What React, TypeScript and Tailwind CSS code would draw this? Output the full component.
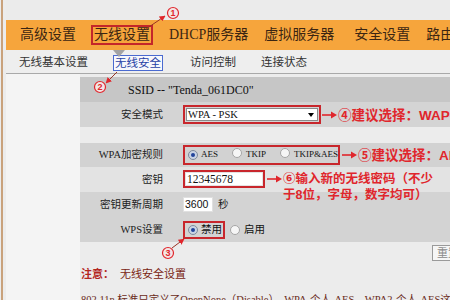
import React from 'react'

const RED = '#e0262c'

function Radio({ on = false }: { on?: boolean }) {
  return (
    <span
      className={
        on
          ? 'inline-flex h-[10px] w-[10px] shrink-0 items-center justify-center rounded-full border border-[#7f8a9c] bg-[#c9d3e4]'
          : 'inline-flex h-[10px] w-[10px] shrink-0 items-center justify-center rounded-full border border-[#a6a6a6] bg-[#f6f6f6]'
      }
    >
      {on && <span className="h-[4px] w-[4px] rounded-full bg-[#22449a]" />}
    </span>
  )
}

function Arrow() {
  return (
    <svg width="15" height="8" viewBox="0 0 15 8" className="shrink-0">
      <line x1="0" y1="4" x2="10" y2="4" stroke={RED} strokeWidth="1.6" />
      <path d="M9 0.5 L15 4 L9 7.5Z" fill={RED} />
    </svg>
  )
}

function Note({ children }: { children: React.ReactNode }) {
  return (
    <span className="whitespace-nowrap font-['Liberation_Sans','Noto_Sans_CJK_SC',sans-serif] text-[13.5px] font-bold leading-[16px] text-[#e0262c]">
      {children}
    </span>
  )
}

function Label({ children }: { children: React.ReactNode }) {
  return (
    <div className="w-[83px] shrink-0 whitespace-nowrap text-right text-[10.5px] leading-[14px] text-[#222]">
      {children}
    </div>
  )
}

// circled step markers ①②③ with their pointer lines
function Marks() {
  const circle = (cx: number, cy: number, n: string) => (
    <g>
      <circle cx={cx} cy={cy} r="5.5" fill="#f3e6e6" stroke={RED} strokeWidth="1.2" />
      <text
        x={cx}
        y={cy + 3.3}
        textAnchor="middle"
        fontSize="9"
        fontWeight="bold"
        fill={RED}
        fontFamily="Liberation Sans, sans-serif"
      >
        {n}
      </text>
    </g>
  )
  return (
    <svg className="pointer-events-none absolute inset-0" width="450" height="300">
      <defs>
        <marker id="ah" viewBox="0 0 10 10" refX="9" refY="5" markerWidth="6" markerHeight="6" orient="auto">
          <path d="M0 0 L10 5 L0 10Z" fill={RED} />
        </marker>
      </defs>
      <line x1="146" y1="29" x2="165" y2="16" stroke="#9a3324" strokeWidth="1" markerEnd="url(#ah)" />
      {circle(173, 13, '1')}
      <line x1="117" y1="72" x2="106" y2="83" stroke="#9a3324" strokeWidth="1" markerEnd="url(#ah)" />
      {circle(100, 87, '2')}
      <line x1="172" y1="248" x2="184" y2="239" stroke="#9a3324" strokeWidth="1" markerEnd="url(#ah)" />
      {circle(168, 253, '3')}
    </svg>
  )
}

export default function App() {
  return (
    <div className="relative h-[300px] w-[450px] overflow-hidden bg-[#ececec] font-['Liberation_Serif','Noto_Sans_CJK_SC',serif]">
      <div className="ml-[1px] flex h-full flex-col border-l-[2px] border-[#c9a27c] pl-[3px]">
        {/* logo strip, mostly cut off */}
        <div className="h-[20px] shrink-0 overflow-hidden bg-[#ebebeb]">
          <div className="mt-[-42px] pl-[10px] font-['Liberation_Sans',sans-serif] text-[48px] font-bold leading-[48px] tracking-[9px] text-[#595959]">
            TENDA
          </div>
        </div>

        {/* main nav */}
        <div className="flex h-[30px] shrink-0 items-center whitespace-nowrap bg-[#f6a53c] text-[14px] leading-[14px] text-[#3b2512]">
          <span className="ml-[14px]">高级设置</span>
          <span className="ml-[15px] border-2 border-[#c4262a] px-[1px] py-[1px]">无线设置</span>
          <span className="ml-[16px]">DHCP服务器</span>
          <span className="ml-[16px]">虚拟服务器</span>
          <span className="ml-[20px]">安全设置</span>
          <span className="ml-[16px]">路由设置</span>
        </div>

        {/* sub nav */}
        <div className="relative flex h-[24px] shrink-0 items-center whitespace-nowrap border-b border-[#a9a9a9] bg-[#eeeeee] text-[11.5px] leading-[12px] text-[#333]">
          <span className="absolute left-[107px] top-0 h-0 w-0 border-x-[6px] border-t-[7px] border-x-transparent border-t-[#a3a3a3]" />
          <span className="ml-[13px]">无线基本设置</span>
          <span className="ml-[25px] mt-[3px] border border-[#4a6ad0] bg-[#f7f8fc] px-[1px] py-[1px] text-[#2641a6]">无线安全</span>
          <span className="ml-[27px]">访问控制</span>
          <span className="ml-[25px]">连接状态</span>
        </div>

        {/* body */}
        <div className="flex flex-1">
          <div className="w-[74px] shrink-0 bg-[#f4f4f4]" />
          <div className="flex-1 pt-[3px]">
            <div className="flex h-[25px] items-center bg-[#c6c6c6] pl-[48px] text-[12px] text-[#111]">
              SSID -- "Tenda_061DC0"
            </div>

            <div className="flex h-[25px] items-center bg-[#d4d4d4]">
              <Label>安全模式</Label>
              <div className="ml-[20px] h-[19px] w-[138px] shrink-0 border-2 border-[#c8262c] p-[1px]">
                <div className="flex h-full items-center border border-[#8a8a8a] bg-white pl-[1px] text-[10.5px] leading-[12px] text-[#111]">
                  WPA - PSK
                  <span className="ml-auto mr-[3px] h-0 w-0 border-x-[3px] border-t-[4px] border-x-transparent border-t-black" />
                </div>
              </div>
              <span className="ml-[1px]">
                <Arrow />
              </span>
              <span className="ml-[1px]">
                <Note>④建议选择：WAP-PSK</Note>
              </span>
            </div>

            <div className="h-[16px]" />

            <div className="flex h-[24px] items-center bg-[#d2d2d2]">
              <Label>WPA加密规则</Label>
              <div className="ml-[20px] flex h-[20px] w-[157px] shrink-0 items-center whitespace-nowrap border-2 border-[#c8262c] pl-[3px] text-[9px] text-[#111]">
                <Radio on />
                <span className="ml-[3px]">AES</span>
                <span className="ml-[14px]">
                  <Radio />
                </span>
                <span className="ml-[4px]">TKIP</span>
                <span className="ml-[14px]">
                  <Radio />
                </span>
                <span className="ml-[4px]">TKIP&amp;AES</span>
              </div>
              <span className="ml-[2px]">
                <Arrow />
              </span>
              <span className="ml-[1px]">
                <Note>⑤建议选择：AES</Note>
              </span>
            </div>

            <div className="flex h-[25px] items-start bg-[#e3e3e3]">
              <div className="mt-[6px] flex items-center">
                <Label>密钥</Label>
              </div>
              <div className="ml-[20px] mt-[3px] h-[18px] w-[82px] shrink-0 border-2 border-[#c8262c] p-[1px]">
                <div className="flex h-full items-center bg-white pl-[1px] text-[11.5px] leading-[12px] text-[#111]">
                  12345678
                </div>
              </div>
              <div className="relative z-10 ml-[2px] mt-[4px] flex items-start">
                <span className="mt-[4px]">
                  <Arrow />
                </span>
                <div className="ml-[1px] w-[150px] whitespace-normal font-['Liberation_Sans','Noto_Sans_CJK_SC',sans-serif] text-[12.5px] font-bold leading-[16px] text-[#e0262c]">
                  ⑥输入新的无线密码（不少于8位，字母，数字均可）
                </div>
              </div>
            </div>

            <div className="flex h-[25px] items-center bg-[#d3d3d3]">
              <Label>密钥更新周期</Label>
              <div className="ml-[20px] flex h-[15px] w-[30px] shrink-0 items-center border border-[#e0e0e0] bg-white pl-[1px] font-['Liberation_Sans',sans-serif] text-[10.5px] text-[#111]">
                3600
              </div>
              <span className="ml-[5px] text-[10.5px] text-[#222]">秒</span>
            </div>

            <div className="flex h-[25px] items-center bg-[#d3d3d3]">
              <Label>WPS设置</Label>
              <div className="ml-[20px] flex h-[18px] w-[42px] shrink-0 items-center whitespace-nowrap border-2 border-[#c8262c] pl-[3px] text-[10.5px] text-[#111]">
                <Radio on />
                <span className="ml-[3px]">禁用</span>
              </div>
              <span className="ml-[5px]">
                <Radio />
              </span>
              <span className="ml-[4px] text-[10.5px] text-[#111]">启用</span>
            </div>

            <div className="mt-[3px] flex h-[16px] pl-[352px]">
              <div className="flex h-[16px] w-[40px] shrink-0 items-center border border-[#9a9a9a] bg-[#f6f6f6] pl-[4px] text-[11px] leading-[12px] text-[#8a8a8a]">
                重置
              </div>
            </div>

            <div className="mt-[6px] flex items-center whitespace-nowrap pl-[1px] text-[11px] leading-[14px]">
              <span className="font-bold text-[#b3261e]">注意：</span>
              <span className="ml-[6px] text-[#7a2412]">无线安全设置</span>
            </div>

            <div className="mt-[12px] whitespace-nowrap pl-[1px] text-[10.5px] leading-[14px] text-[#6a2a1a]">
              802.11n 标准只定义了OpenNone（Disable），WPA-个人-AES，WPA2-个人-AES这 3种加密方式
            </div>
          </div>
        </div>
      </div>
      <Marks />
    </div>
  )
}
